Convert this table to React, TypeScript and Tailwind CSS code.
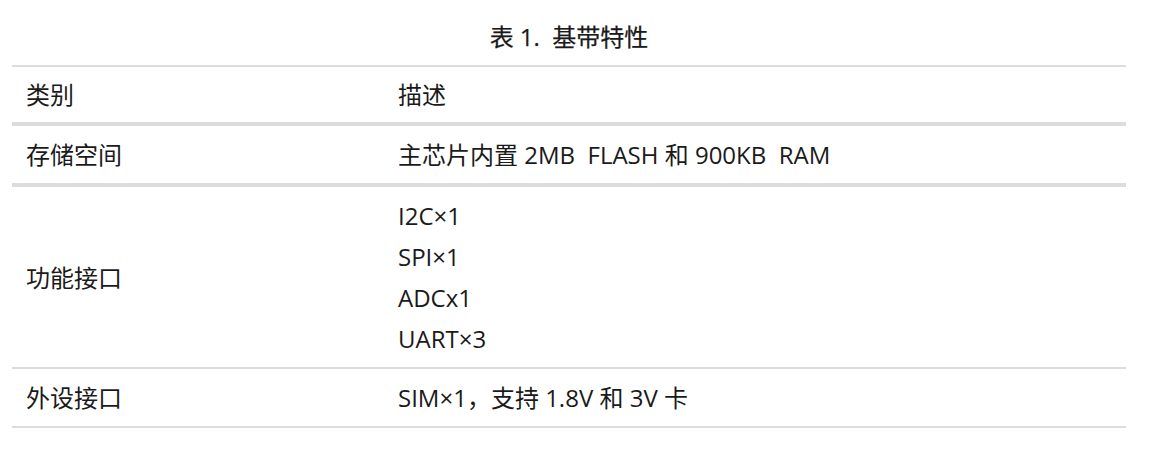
const rows: { label: string; items: string[] }[] = [
  { label: '存储空间', items: ['主芯片内置 2MB\u00a0\u00a0FLASH 和 900KB\u00a0\u00a0RAM'] },
  { label: '功能接口', items: ['I2C×1', 'SPI×1', 'ADCx1', 'UART×3'] },
  { label: '外设接口', items: ['SIM×1，支持 1.8V 和 3V 卡'] },
];

export default function App() {
  return (
    <div className="w-[1155px] h-[451px] bg-white text-[#1a1a1a] text-[24px] font-['Open_Sans','Noto_Sans_CJK_SC',sans-serif]">
      {/* caption */}
      <div className="pt-[17px] pb-[8px] leading-[40px] text-center font-normal text-[24px] pl-[12px] pr-[29px] [-webkit-text-stroke:0.25px_#1a1a1a]">
        表 1.&nbsp; 基带特性
      </div>
      <table className="ml-[12px] w-[1114px] border-collapse border-t-2 border-[#dcdcdc] leading-[41px]">
        <thead>
          <tr className="border-b-4 border-[#dcdcdc]">
            <th className="w-[372px] px-[14px] py-[7px] text-left font-normal">类别</th>
            <th className="px-[14px] py-[7px] text-left font-normal">描述</th>
          </tr>
        </thead>
        <tbody>
          {rows.map((r, i) => (
            <tr key={r.label} className={i === 0 ? 'border-b-4 border-[#dcdcdc]' : 'border-b-2 border-[#dcdcdc]'}>
              <td className="px-[14px] py-[8px] align-middle">{r.label}</td>
              <td className="px-[14px] py-[8px] align-middle">
                {r.items.map(t => (
                  <div key={t}>{t}</div>
                ))}
              </td>
            </tr>
          ))}
        </tbody>
      </table>
    </div>
  );
}
